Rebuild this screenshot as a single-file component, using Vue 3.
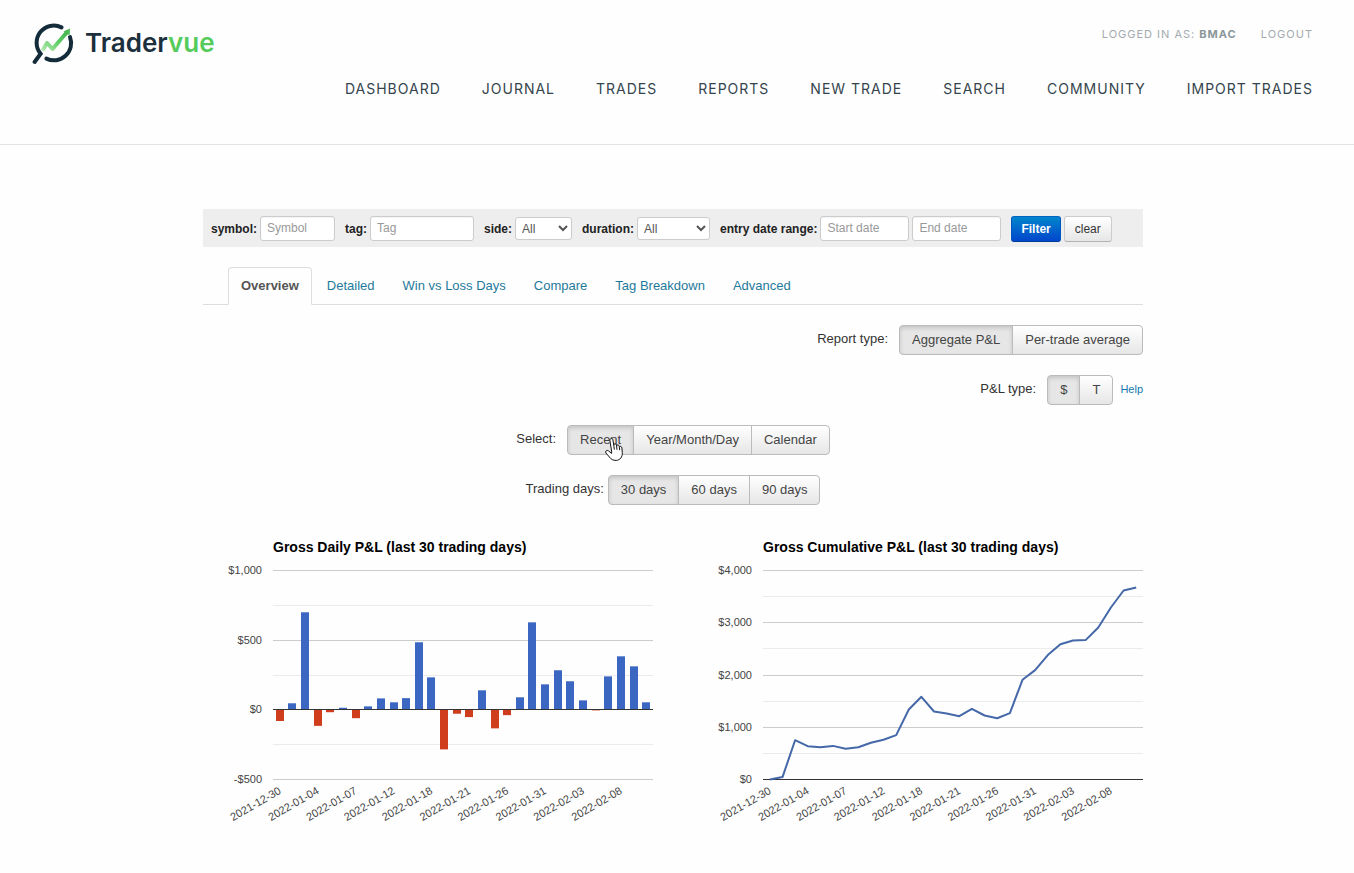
<script setup>
import { ref } from 'vue'

const navItems = ['Dashboard', 'Journal', 'Trades', 'Reports', 'New Trade', 'Search', 'Community', 'Import Trades']
const tabs = ['Overview', 'Detailed', 'Win vs Loss Days', 'Compare', 'Tag Breakdown', 'Advanced']

const activeTab = ref('Overview')
const reportType = ref('Aggregate P&L')
const plType = ref('$')
const period = ref('Recent')
const days = ref('30 days')

const dates = [
  '2021-12-30', '2022-01-04', '2022-01-07', '2022-01-12', '2022-01-18',
  '2022-01-21', '2022-01-26', '2022-01-31', '2022-02-03', '2022-02-08',
]
const daily = [
  -80, 47, 700, -115, -17, 15, -60, 25, 82, 54, 84, 485, 233, -284, -28,
  -52, 140, -133, -38, 90, 628, 183, 284, 205, 68, -4, 240, 384, 312, 54,
]
const cumulative = [
  0, 45, 753, 638, 619, 644, 587, 619, 702, 759, 849, 1340, 1582, 1302, 1263,
  1212, 1353, 1225, 1174, 1270, 1908, 2093, 2380, 2590, 2660, 2667, 2909, 3292, 3617, 3675,
]

const left = 70
const plotWidth = 380
const top = 40
const plotHeight = 209
const centre = (i) => left + 0.5 + ((plotWidth - 1) / 30) * (i + 0.5)

const makeScale = (min, max) => (v) => top + ((max - v) / (max - min)) * plotHeight
const snap = (y) => Math.round(y) + 0.5

const yDaily = makeScale(-500, 1000)
const yTotal = makeScale(0, 4000)

const zero = yDaily(0) + 0.5
const bars = daily.map((v, i) => {
  const h = Math.abs(v) * (plotHeight / 1500)
  return { x: Math.round(centre(i) - 4), y: v > 0 ? zero - h : zero, h, loss: v < 0 }
})
const line = cumulative.map((v, i) => `${centre(i).toFixed(1)},${(yTotal(v) + 0.5).toFixed(1)}`).join(' ')

const charts = [
  {
    title: 'Gross Daily P&L (last 30 trading days)',
    major: [[1000, '$1,000'], [500, '$500'], [0, '$0'], [-500, '-$500']].map(([v, t]) => ({ y: snap(yDaily(v)), t })),
    minor: [750, 250, -250].map((v) => snap(yDaily(v))),
    base: snap(yDaily(0)),
    bars,
  },
  {
    title: 'Gross Cumulative P&L (last 30 trading days)',
    major: [[4000, '$4,000'], [3000, '$3,000'], [2000, '$2,000'], [1000, '$1,000'], [0, '$0']].map(([v, t]) => ({ y: snap(yTotal(v)), t })),
    minor: [3500, 2500, 1500, 500].map((v) => snap(yTotal(v))),
    base: snap(yTotal(0)),
    line,
  },
]
</script>

<template>
  <div class="page">
    <header class="header">
      <a class="logo" href="#" aria-label="Tradervue">
        <svg class="mark" viewBox="0 0 44 44" aria-hidden="true">
          <defs>
            <linearGradient id="rise" x1="0" y1="1" x2="1" y2="0">
              <stop offset="0" stop-color="#b5e8b0" />
              <stop offset="0.5" stop-color="#62cf68" />
              <stop offset="1" stop-color="#3fae4c" />
            </linearGradient>
          </defs>
          <path class="ring" d="M29.5 5.4A17.2 17.2 0 0 0 8.6 31.8L2.6 40" />
          <path class="ring" d="M38 15A17.2 17.2 0 0 1 14.4 36.6" />
          <path class="rise" d="M10.5 28.5L15 21L20.5 27L36 9" />
          <path class="tip" d="M31.5 9.5L38 6.5L37.6 13.5Z" />
        </svg>
        <span class="wordmark">Trader<span class="vue">vue</span></span>
      </a>
      <div class="menus">
        <div class="account">
          <span>Logged in as: <b>bmac</b></span>
          <a href="#">Logout</a>
        </div>
        <nav class="nav">
          <a v-for="item in navItems" :key="item" href="#">{{ item }}</a>
        </nav>
      </div>
    </header>

    <main class="main">
      <form class="filters" @submit.prevent>
        <div class="field"><label for="symbol">symbol:</label><input id="symbol" class="symbol" type="text" placeholder="Symbol"></div>
        <div class="field"><label for="tag">tag:</label><input id="tag" class="tag" type="text" placeholder="Tag"></div>
        <div class="field">
          <label for="side">side:</label>
          <select id="side" class="side"><option>All</option><option>Long</option><option>Short</option></select>
        </div>
        <div class="field">
          <label for="duration">duration:</label>
          <select id="duration" class="duration"><option>All</option><option>Intraday</option><option>Multiday</option></select>
        </div>
        <div class="field">
          <label for="start">entry date range:</label>
          <input id="start" class="date" type="text" placeholder="Start date">
          <input class="date" type="text" placeholder="End date" aria-label="End date">
        </div>
        <div class="field">
          <button class="small primary" type="submit">Filter</button>
          <button class="small" type="reset">clear</button>
        </div>
      </form>

      <nav class="tabs">
        <a v-for="tab in tabs" :key="tab" href="#" :class="{ current: tab === activeTab }" @click.prevent="activeTab = tab">{{ tab }}</a>
      </nav>

      <div class="options">
        <div class="row right">
          <span class="caption">Report type:</span>
          <div class="group">
            <button v-for="o in ['Aggregate P&L', 'Per-trade average']" :key="o" type="button" :class="{ on: o === reportType }" @click="reportType = o">{{ o }}</button>
          </div>
        </div>
        <div class="row right">
          <span class="caption">P&amp;L type:</span>
          <div class="group">
            <button v-for="o in ['$', 'T']" :key="o" type="button" :class="{ on: o === plType }" @click="plType = o">{{ o }}</button>
          </div>
          <a class="help" href="#">Help</a>
        </div>
        <div class="row">
          <span class="caption">Select:</span>
          <div class="group">
            <button v-for="o in ['Recent', 'Year/Month/Day', 'Calendar']" :key="o" type="button" :class="{ on: o === period }" @click="period = o">{{ o }}</button>
            <svg class="pointer" viewBox="0 0 18 24" aria-hidden="true">
              <path d="M6.6 14.2L4.9 3.6C4.6 1.2 7.5 0.8 7.9 3L8.8 8.2C8.7 6.4 11.3 6.2 11.5 8L11.6 8.9C11.8 7.4 14 7.5 14.2 9.2L14.4 10.2C14.8 8.9 16.7 9.2 16.9 10.9L17.3 15.6C17.6 20 15 23.2 11.2 23.4C8 23.5 6.2 22.4 4.4 20L0.9 16C-0.2 14.2 2 12.7 3.4 13.8L6.6 16.4Z" />
              <path d="M8.8 8.2L9.3 12.6M11.6 8.9L12 12.8M14.4 10.2L14.7 13.2" />
            </svg>
          </div>
        </div>
        <div class="row">
          <span class="caption tight">Trading days:</span>
          <div class="group">
            <button v-for="o in ['30 days', '60 days', '90 days']" :key="o" type="button" :class="{ on: o === days }" @click="days = o">{{ o }}</button>
          </div>
        </div>
      </div>

      <div class="charts">
        <svg v-for="chart in charts" :key="chart.title" class="chart" viewBox="0 0 450 300" role="img" :aria-label="chart.title">
          <text class="title" :x="left" y="22">{{ chart.title }}</text>
          <line v-for="y in chart.minor" :key="y" class="minor" :x1="left" :x2="left + plotWidth" :y1="y" :y2="y" />
          <template v-for="tick in chart.major" :key="tick.t">
            <line class="major" :x1="left" :x2="left + plotWidth" :y1="tick.y" :y2="tick.y" />
            <text class="label" x="59" :y="tick.y + 3.5">{{ tick.t }}</text>
          </template>
          <rect v-for="(bar, i) in chart.bars || []" :key="i" :class="bar.loss ? 'loss' : 'gain'" :x="bar.x" :y="bar.y" width="8" :height="bar.h" />
          <line class="base" :x1="left" :x2="left + plotWidth" :y1="chart.base" :y2="chart.base" />
          <polyline v-if="chart.line" class="trend" :points="chart.line" />
          <text v-for="(date, i) in dates" :key="date" class="label" :transform="`translate(${centre(i * 3) + 2} 263) rotate(-30)`">{{ date }}</text>
        </svg>
      </div>
    </main>
  </div>
</template>

<style>
body { margin: 0; background: #fefefe; }
</style>

<style scoped>
.page {
  font-family: "Liberation Sans", Arial, sans-serif;
  font-size: 13px;
  line-height: 20px;
  color: #333;
}
a { text-decoration: none; }

.header {
  display: flex;
  justify-content: space-between;
  padding: 22px 41px 43px 32px;
  border-bottom: 1px solid #e2e4e4;
}
.logo { display: flex; align-items: flex-start; gap: 9px; }
.mark { width: 44px; height: 44px; }
.ring { fill: none; stroke: #142c3a; stroke-width: 4; stroke-linecap: round; }
.rise { fill: none; stroke: url(#rise); stroke-width: 4; stroke-linejoin: round; }
.tip { fill: #4dba56; }
.wordmark {
  font: 600 26px/42px Inter, sans-serif;
  color: #1b2f3c;
}
.vue { color: #55cb5b; }
.menus {
  display: flex;
  flex-direction: column;
  align-items: flex-end;
  gap: 33px;
  padding-top: 2px;
  font-family: Inter, sans-serif;
  font-weight: 400;
  text-transform: uppercase;
  letter-spacing: 1px;
}
.account { display: flex; gap: 24px; font-size: 11px; color: #a3abae; }
.account a { color: inherit; }
.account b { font-weight: 700; color: #8b979b; }
.nav { display: flex; gap: 41px; font-size: 14px; line-height: 24px; }
.nav a { color: #34444c; }

.main {
  box-sizing: border-box;
  max-width: 948px;
  margin: 64px auto 0;
  padding-right: 8px;
  width: 100%;
}
.page > .main { margin-left: max(0px, calc(50% - 474px)); }

.filters {
  display: flex;
  gap: 10px;
  padding: 7px 8px 5px;
  background: #eee;
  font-size: 12px;
}
.field { display: flex; align-items: flex-start; gap: 3px; }
.field label { font-weight: bold; line-height: 26px; color: #222; white-space: nowrap; }
.filters input, .filters select {
  box-sizing: border-box;
  height: 25px;
  border: 1px solid #ccc;
  border-radius: 3px;
  background: #fff;
  font: 12px/18px "Liberation Sans", Arial, sans-serif;
  color: #555;
}
.filters input { padding: 0 6px 1px; box-shadow: inset 0 1px 1px #0000000d; }
.filters input::placeholder { color: #999; }
.filters select { height: 23px; margin: 1px 0; padding: 0 2px; }
.symbol { width: 75px; }
.tag { width: 104px; }
.side { width: 57px; }
.duration { width: 73px; }
.date { width: 89px; }

button {
  box-sizing: border-box;
  border: 1px solid #bbb;
  background: linear-gradient(#fff, #e6e6e6);
  color: #333;
  font: 13px/18px "Liberation Sans", Arial, sans-serif;
  white-space: nowrap;
}
.small {
  height: 26px;
  padding: 0 10px;
  border-color: #ccc #ccc #b3b3b3;
  border-radius: 3px;
  font-size: 12px;
}
.primary {
  padding: 0 9px;
  border-color: #0064c0 #0055c0 #003c98;
  background: linear-gradient(#0085cc, #0046cc);
  color: #fff;
  font-weight: bold;
}

.tabs {
  display: flex;
  gap: 2px;
  margin-top: 20px;
  padding-left: 25px;
  border-bottom: 1px solid #ddd;
}
.tabs a {
  margin-bottom: -1px;
  padding: 8px 12px;
  border: 1px solid transparent;
  border-radius: 4px 4px 0 0;
  color: #1f7a9c;
}
.tabs .current {
  border-color: #ddd #ddd #fefefe;
  background: #fefefe;
  color: #555;
  font-weight: bold;
}

.options { display: flex; flex-direction: column; gap: 20px; padding-top: 20px; }
.row { display: flex; justify-content: center; }
.right { justify-content: flex-end; }
.caption { margin-right: 11px; line-height: 28px; }
.tight { margin-right: 4px; }
.group { position: relative; display: flex; }
.group button { height: 30px; padding: 0 12px; margin-left: -1px; color: #444; }
.group button:first-of-type { margin-left: 0; border-radius: 4px 0 0 4px; }
.group button:last-of-type { border-radius: 0 4px 4px 0; }
.group .on {
  background: #e6e6e6;
  box-shadow: inset 0 2px 4px #00000026;
}
.pointer { position: absolute; left: 38px; top: 12px; width: 18px; height: 24px; overflow: visible; }
.pointer path { fill: #fff; stroke: #111; stroke-width: 1; stroke-linejoin: round; }
.help { margin-left: 7px; font-size: 11px; line-height: 28px; color: #1478ad; }

.charts { display: grid; grid-template-columns: 1fr 1fr; gap: 40px; margin-top: 25px; }
.chart { display: block; width: 100%; overflow: visible; }
.title { font-size: 14px; font-weight: bold; fill: #000; }
.label { font-size: 11px; fill: #444; text-anchor: end; }
.major { stroke: #ccc; }
.minor { stroke: #ebebeb; }
.base { stroke: #333; }
.gain { fill: #3b66c1; }
.loss { fill: #d03d1c; }
.trend { fill: none; stroke: #4468a8; stroke-width: 2; stroke-linejoin: round; }
</style>
